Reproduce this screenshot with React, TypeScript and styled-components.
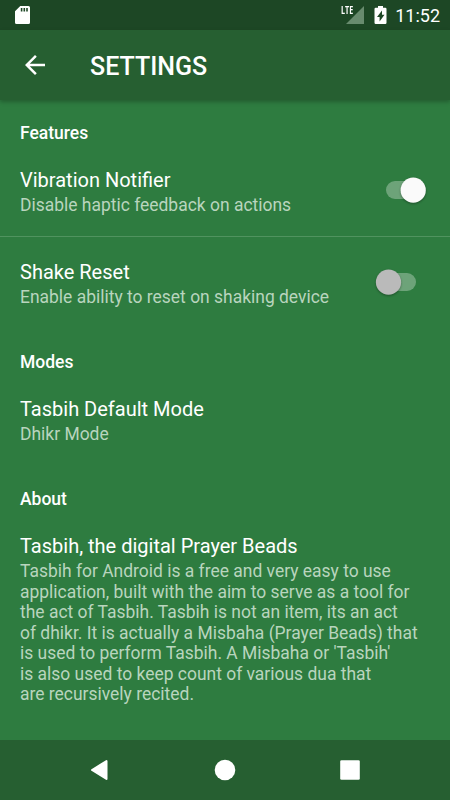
import React from "react";
import styled, { createGlobalStyle } from "styled-components";

const Global = createGlobalStyle`
  * { box-sizing: border-box; }
  body { margin: 0; background: #2e7c40; font-family: Roboto, sans-serif; }
  svg { display: block; flex: none; overflow: visible; }
`;
const Screen = styled.div`
  width: 450px; height: 800px; display: flex; flex-direction: column;
  background: #2e7c40; color: #fff; overflow: hidden;
`;
const StatusBar = styled.header`
  height: 30px; background: #1d4725; display: flex; align-items: center;
  padding: 0 10px 0 15px; justify-content: space-between;
`;
const StatusGroup = styled.div`display: flex; align-items: center; height: 30px;`;
const NetworkLabel = styled.span`
  align-self: flex-start; margin: 5px -7px 0 0; width: 12px; height: 10px;
  font: 700 10.5px/10px "Open Sans", sans-serif; display: flex;
  span { transform: scaleX(.68); transform-origin: left; }
`;
const Clock = styled.time`font-size: 18px; line-height: 30px; margin: 2px 0 0 8px;`;
const AppBar = styled.div`
  height: 70px; background: #265f31; display: flex; align-items: center;
  padding: 0 20px; gap: 40px; box-shadow: 0 2px 4px rgba(0,0,0,.25); z-index: 1;
`;
const Title = styled.h1`margin: 3px 0 0; font-size: 25px; font-weight: 500; line-height: 30px;`;
const Content = styled.main`flex: 1; display: flex; flex-direction: column;`;
const Heading = styled.h2<{ $top: number }>`
  margin: 0; padding: ${p => p.$top}px 20px 0; font-size: 17.5px; line-height: 20px; font-weight: 500;
`;
const Row = styled.section<{ $height: number; $top?: number; $line?: boolean }>`
  height: ${p => p.$height}px; display: flex; align-items: flex-start;
  justify-content: space-between; padding: ${p => p.$top ?? 24}px 20px 0;
  border-bottom: ${p => (p.$line ? "1px solid #50935f" : "0")};
`;
const RowTitle = styled.div`font-size: 20px; line-height: 26px; white-space: nowrap;`;
const Summary = styled.div`font-size: 17.47px; line-height: 20.5px; margin-top: 2px; color: #b9d5be; white-space: pre;`;
const Toggle = styled.div`
  width: 58px; height: 34px; flex: none; margin: 6px -7px 0 0;
  circle { filter: drop-shadow(0 1px 1px rgba(0,0,0,.35)); }
`;
const NavBar = styled.nav`
  height: 60px; background: #265f31; display: flex; justify-content: center; align-items: center; gap: 101px;
`;

const about = `Tasbih for Android is a free and very easy to use
application, built with the aim to serve as a tool for
the act of Tasbih. Tasbih is not an item, its an act
of dhikr. It is actually a Misbaha (Prayer Beads) that
is used to perform Tasbih. A Misbaha or 'Tasbih'
is also used to keep count of various dua that
are recursively recited.`;

function Switch({ on }: { on: boolean }) {
  return (
    <Toggle role="switch" aria-checked={on}>
      <svg width="58" height="34" viewBox="0 0 58 34">
        <rect x="7" y="8" width="30" height="18" rx="9" fill="#fff" fillOpacity=".3" />
        <circle cx={on ? 34.2 : 9.5} cy="17.2" r="12.6" fill={on ? "#fafafa" : "#bababa"} />
      </svg>
    </Toggle>
  );
}

export default function App() {
  return (
    <Screen>
      <Global />
      <StatusBar>
        <StatusGroup>
          <svg width="15" height="18" viewBox="0 0 15 18">
            <path fillRule="evenodd" fill="#fff" d="M5.3 0h8.2Q15 0 15 1.5v15Q15 18 13.500 18h-12Q0 18 0 16.500V5.300ZM5.800 2v3.500h1.600V2ZM8.500 2v3.500h1.600V2ZM11.200 2v3.500h1.600V2Z" />
          </svg>
        </StatusGroup>
        <StatusGroup>
          <NetworkLabel><span>LTE</span></NetworkLabel>
          <svg width="41" height="30" viewBox="0 0 41 30">
            <path d="M0 24 18 6v18Z" fill="#688b6e" />
            <path fillRule="evenodd" fill="#fff" d="M32 6h5v1.800h2.300q1.200 0 1.200 1.200v13.800q0 1.200-1.200 1.200h-9.600q-1.200 0-1.200-1.200V9q0-1.200 1.200-1.200H32ZM36 10.500l-5 6.500h2.600v4.500l4.900-6.700H36Z" />
          </svg>
          <Clock>11:52</Clock>
        </StatusGroup>
      </StatusBar>
      <AppBar>
        <svg width="30" height="30" viewBox="0 0 24 24" fill="#fff"><path d="M20 11H7.830l5.590-5.590L12 4l-8 8 8 8 1.410-1.410L7.830 13H20z" /></svg>
        <Title>SETTINGS</Title>
      </AppBar>
      <Content>
        <Heading $top={23}>Features</Heading>
        <Row $height={94} $line><div><RowTitle>Vibration Notifier</RowTitle><Summary>Disable haptic feedback on actions</Summary></div><Switch on /></Row>
        <Row $height={92} $top={22}><div><RowTitle>Shake Reset</RowTitle><Summary>Enable ability to reset on shaking device</Summary></div><Switch on={false} /></Row>
        <Heading $top={23}>Modes</Heading>
        <Row $height={92}><div><RowTitle>Tasbih Default Mode</RowTitle><Summary>Dhikr Mode</Summary></div></Row>
        <Heading $top={25}>About</Heading>
        <Row $height={230}><div><RowTitle>Tasbih, the digital Prayer Beads</RowTitle><Summary>{about}</Summary></div></Row>
      </Content>
      <NavBar>
        <svg width="24" height="24" viewBox="0 0 24 24"><path d="m4 12 14.500-9v18Z" fill="#fff" stroke="#fff" strokeWidth="2" strokeLinejoin="round" /></svg>
        <svg width="24" height="24" viewBox="0 0 24 24"><circle cx="12" cy="12" r="10.300" fill="#fff" /></svg>
        <svg width="24" height="24" viewBox="0 0 24 24"><rect x="2.200" y="2.200" width="19.600" height="19.600" rx="1.300" fill="#fff" /></svg>
      </NavBar>
    </Screen>
  );
}
